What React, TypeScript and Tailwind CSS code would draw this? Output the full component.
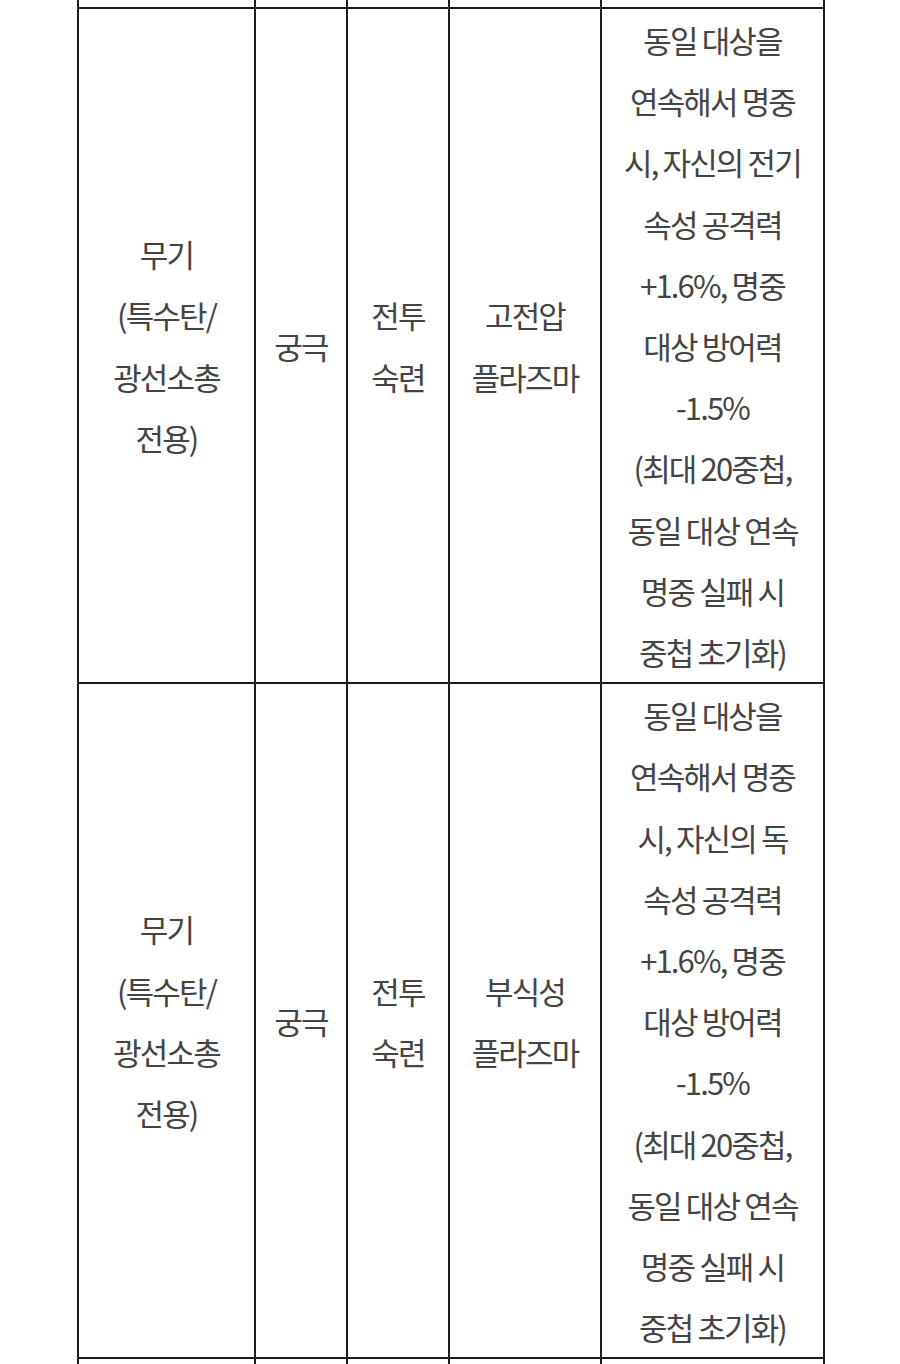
const rows = [
  {
    type: ["무기", "(특수탄/", "광선소총", "전용)"],
    grade: ["궁극"],
    cat: ["전투", "숙련"],
    name: ["고전압", "플라즈마"],
    desc: [
      "동일 대상을",
      "연속해서 명중",
      "시, 자신의 전기",
      "속성 공격력",
      "+1.6%, 명중",
      "대상 방어력",
      "-1.5%",
      "(최대 20중첩,",
      "동일 대상 연속",
      "명중 실패 시",
      "중첩 초기화)",
    ],
  },
  {
    type: ["무기", "(특수탄/", "광선소총", "전용)"],
    grade: ["궁극"],
    cat: ["전투", "숙련"],
    name: ["부식성", "플라즈마"],
    desc: [
      "동일 대상을",
      "연속해서 명중",
      "시, 자신의 독",
      "속성 공격력",
      "+1.6%, 명중",
      "대상 방어력",
      "-1.5%",
      "(최대 20중첩,",
      "동일 대상 연속",
      "명중 실패 시",
      "중첩 초기화)",
    ],
  },
];

function Lines({ lines }: { lines: string[] }) {
  return (
    <>
      {lines.map((l, i) => (
        <span key={i} className="block whitespace-nowrap">
          {l}
        </span>
      ))}
    </>
  );
}

const cell = "border-2 border-[#1c1c1c] text-center align-middle p-0";

export default function App() {
  return (
    <div
      className="w-[900px] h-[1364px] overflow-hidden bg-white pl-[77px]"
      style={{ fontFamily: '"Noto Sans CJK KR", "Noto Sans", sans-serif' }}
    >
      <table className="table-fixed border-collapse w-[746px] text-[31px] leading-[61.2px] tracking-[-0.06em] text-[#444444]">
        <colgroup>
          <col className="w-[177px]" />
          <col className="w-[92px]" />
          <col className="w-[102px]" />
          <col className="w-[152px]" />
          <col className="w-[223px]" />
        </colgroup>
        <tbody>
          <tr className="h-[8px]">
            <td className={cell + " border-t-0"}></td>
            <td className={cell + " border-t-0"}></td>
            <td className={cell + " border-t-0"}></td>
            <td className={cell + " border-t-0"}></td>
            <td className={cell + " border-t-0"}></td>
          </tr>
          {rows.map((r, i) => (
            <tr key={i}>
              <td className={cell}>
                <Lines lines={r.type} />
              </td>
              <td className={cell}>
                <Lines lines={r.grade} />
              </td>
              <td className={cell}>
                <Lines lines={r.cat} />
              </td>
              <td className={cell}>
                <Lines lines={r.name} />
              </td>
              <td className={cell}>
                <Lines lines={r.desc} />
              </td>
            </tr>
          ))}
          <tr className="h-[40px]">
            <td className={cell}></td>
            <td className={cell}></td>
            <td className={cell}></td>
            <td className={cell}></td>
            <td className={cell}></td>
          </tr>
        </tbody>
      </table>
    </div>
  );
}
